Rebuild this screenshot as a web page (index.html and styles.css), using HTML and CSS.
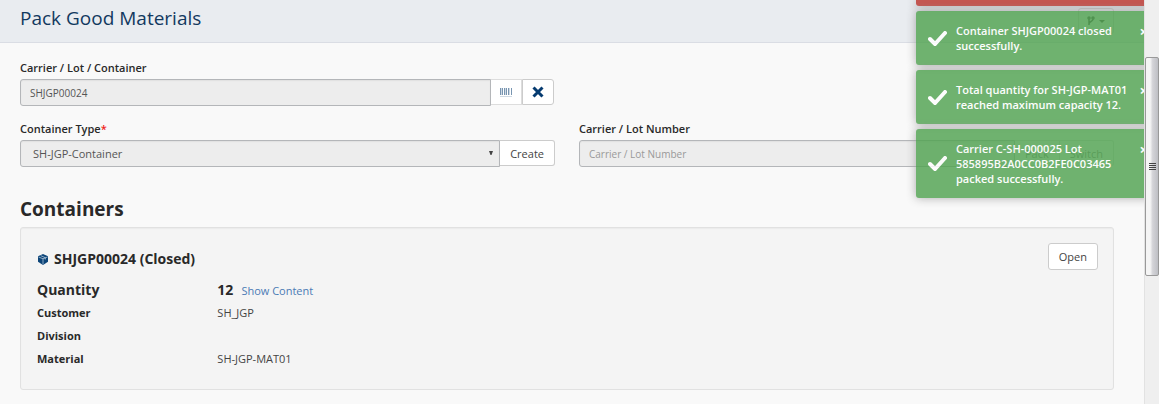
FILE: index.html
```html
<!DOCTYPE html>
<html lang="en">
<head>
<meta charset="utf-8">
<title>Pack Good Materials</title>
<link rel="stylesheet" href="styles.css">
</head>
<body>
<div class="page">
  <header class="page-header">
    <h1 class="page-title">Pack Good Materials</h1>
    <button class="btn branch-btn" type="button" aria-label="Options">
      <svg width="8" height="10" viewBox="0 0 8 10" fill="none" stroke="currentColor" stroke-width="1.500"><circle cx="2" cy="2" r="1"/><circle cx="6" cy="2" r="1"/><path d="M2 3v6M6 3c0 3-4 2-4 5"/></svg>
      <span class="caret"></span>
    </button>
  </header>
  <main class="content">
    <form class="form-grid">
      <div class="field first">
        <label class="label" for="carrier">Carrier / Lot / Container</label>
        <div class="group">
          <input class="control" id="carrier" type="text" value="SHJGP00024" readonly>
          <button class="btn icon-btn scan" type="button" aria-label="Scan barcode">
            <svg width="12" height="9" viewBox="0 0 12 9" fill="#0a3f73"><path d="M0 0h1v7H0zM2 0h1v7H2zM4 0h1v7H4zM6 0h1v7H6zM8 0h1v7H8zM11 0h1v7h-1z"/><path opacity=".35" d="M1 0h1v7H1zM5 0h1v7H5zM9 0h1v7H9zM0 8h12v1H0z"/></svg>
          </button>
          <button class="btn icon-btn" type="button" aria-label="Clear">
            <svg width="12" height="12" viewBox="0 0 12 12" stroke="#063b70" stroke-width="3"><path d="M1.500 1.500l9 9M10.500 1.500l-9 9"/></svg>
          </button>
        </div>
      </div>
      <div class="field">
        <label class="label" for="type">Container Type<span class="required">*</span></label>
        <div class="group">
          <div class="select-wrap">
            <select class="control select" id="type"><option>SH-JGP-Container</option></select>
            <svg class="arrow" width="4" height="4" viewBox="0 0 4 4"><path d="M0 0h4L2.500 4h-1z" fill="#444"/></svg>
          </div>
          <button class="btn" type="button">Create</button>
        </div>
      </div>
      <div class="field">
        <label class="label" for="lot">Carrier / Lot Number</label>
        <div class="group">
          <input class="control" id="lot" type="text" placeholder="Carrier / Lot Number" readonly>
          <button class="btn faded" type="button">Pack</button>
          <button class="btn faded" type="button">Switch</button>
        </div>
      </div>
    </form>
    <h2 class="section-title">Containers</h2>
    <section class="card">
      <div class="card-head">
        <h3 class="card-title">
          <svg width="10" height="11" viewBox="0 0 11 12"><path d="M5.500 0L11 2.500v6L5.500 12 0 8.500v-6z" fill="#0b4478"/><path d="M0.500 3.200l5 2 5-2M5.500 5.200v6M3 1.800l5 2.200v2" fill="none" stroke="#dbe6f0" stroke-width=".7"/></svg>
          SHJGP00024 (Closed)
        </h3>
        <button class="btn open-btn" type="button">Open</button>
      </div>
      <dl class="details">
        <dt class="large">Quantity</dt><dd><strong class="large">12</strong><a class="link" href="#">Show Content</a></dd>
        <dt>Customer</dt><dd>SH_JGP</dd>
        <dt>Division</dt><dd></dd>
        <dt>Material</dt><dd>SH-JGP-MAT01</dd>
      </dl>
    </section>
  </main>
  <div class="toasts">
    <div class="toast error"></div>
    <div class="toast"><svg class="check" width="19" height="15" viewBox="0 0 19 15"><path d="M2 8l5 5L17 2" fill="none" stroke="#fff" stroke-width="4" stroke-linecap="round"/></svg><p class="message">Container SHJGP00024 closed<br>successfully.</p><button class="close" type="button" aria-label="Close">×</button></div>
    <div class="toast"><svg class="check" width="19" height="15" viewBox="0 0 19 15"><path d="M2 8l5 5L17 2" fill="none" stroke="#fff" stroke-width="4" stroke-linecap="round"/></svg><p class="message">Total quantity for SH-JGP-MAT01<br>reached maximum capacity 12.</p><button class="close" type="button" aria-label="Close">×</button></div>
    <div class="toast"><svg class="check" width="19" height="15" viewBox="0 0 19 15"><path d="M2 8l5 5L17 2" fill="none" stroke="#fff" stroke-width="4" stroke-linecap="round"/></svg><p class="message">Carrier C-SH-000025 Lot<br>585895B2A0CC0B2FE0C03465<br>packed successfully.</p><button class="close" type="button" aria-label="Close">×</button></div>
  </div>
</div>
<div class="scrollbar"><div class="thumb"><svg width="7" height="8" viewBox="0 0 7 8" shape-rendering="crispEdges"><path d="M0 0h7v1H0zM0 2h7v1H0zM0 4h7v1H0zM0 6h7v1H0z" fill="#444"/></svg></div></div>
</body>
</html>
```
FILE: styles.css
```css
* { box-sizing: border-box; }
body {
  margin: 0;
  display: flex;
  min-height: 100vh;
  background: #f9f9f9;
  color: #292929;
  font: 11px/15px "Open Sans", sans-serif;
}
h1, h2, h3, p, dl, dd { margin: 0; }
.page { position: relative; flex: 1; min-width: 0; overflow: hidden; }
.page-header {
  display: flex;
  justify-content: space-between;
  align-items: flex-start;
  height: 43px;
  padding: 8px 30px 0 20px;
  background: #e9ecf0;
  border-bottom: 1px solid #dadde4;
}
.page-title { color: #12395f; font-size: 19px; font-weight: 400; line-height: 20px; }
.content { padding: 17px 30px 14px 20px; }
.form-grid { display: grid; grid-template-columns: 1fr 1fr; gap: 15px 24px; }
.first { grid-column: 1 / -1; width: calc(50% - 13px); }
.label { display: block; margin-bottom: 4px; font-size: 11px; font-weight: 600; line-height: 15px; }
.required { color: #e22; }
.group { display: flex; }
.control {
  flex: 1;
  min-width: 0;
  width: 100%;
  height: 27px;
  padding: 0 9px;
  background: #ededed;
  border: 1px solid #b4b6b9;
  border-radius: 3px 0 0 3px;
  box-shadow: inset 0 1px 1px #e0e0e0;
  color: #555;
  font: 10px/15px "Open Sans", sans-serif;
}
.control::placeholder { color: #999; opacity: 1; }
.select-wrap { position: relative; flex: 1; }
.select { appearance: none; padding: 0 12px; font-size: 11px; display: block; }
.arrow { position: absolute; right: 7px; top: 11px; }
.btn {
  height: 26px;
  padding: 0 10px;
  background: #fff;
  border: 1px solid #ccc;
  border-left-width: 0;
  color: #444;
  font: 11px/15px "Open Sans", sans-serif;
}
.group .btn:last-child { border-radius: 0 3px 3px 0; }
.icon-btn { display: flex; align-items: center; justify-content: center; width: 32px; padding: 0; }
.icon-btn + .icon-btn { border-left-width: 1px; }
.scan svg { opacity: .55; }
.scan { width: 31px; border-color: #ddd; }
.faded { opacity: .65; }
.branch-btn { display: flex; align-items: center; justify-content: center; gap: 4px; width: 36px; padding: 0; background: none; border-left-width: 1px; border-radius: 3px; }
.caret { border: 3px solid transparent; border-top-color: currentColor; border-bottom: 0; }
.section-title { margin-top: 30px; font-size: 19px; font-weight: 700; line-height: 24px; }
.card {
  margin-top: 6px;
  padding: 15px 15px 19px 16px;
  background: #f4f4f4;
  border: 1px solid #e1e1e1;
  border-radius: 3px;
  box-shadow: inset 0 1px 1px #ececec;
}
.card-head { display: flex; justify-content: space-between; align-items: flex-start; }
.card-title { display: flex; align-items: center; gap: 6px; padding: 6px 0 0 1px; font-size: 14px; font-weight: 700; line-height: 20px; }
.open-btn { height: 27px; border-left-width: 1px; border-radius: 3px; }
.details { display: grid; grid-template-columns: 17% 1fr; grid-auto-rows: 23px; margin-top: 8px; line-height: 23px; }
.details dt { font-weight: 700; }
.details dd { color: #444; }
.details .large { font-size: 14px; font-weight: 700; color: #292929; }
.link { margin-left: 8px; color: #4b7bb5; text-decoration: none; }
.toasts { position: absolute; top: 0; right: -28px; width: 256px; display: flex; flex-direction: column; gap: 5px; }
.toast {
  display: flex;
  align-items: center;
  gap: 9px;
  padding: 12px;
  background: #51a351;
  border-radius: 3px;
  box-shadow: 0 0 10px #999;
  color: #fff;
  opacity: .82;
}
.error { height: 6px; padding: 0; background: #bd362f; border-radius: 0 0 3px 3px; }
.message { flex: 1; font-weight: 600; white-space: nowrap; }
.close { align-self: flex-start; padding: 0; margin-right: 12px; border: 0; background: none; color: #fff; font: 700 15px/16px "Open Sans", sans-serif; }
.scrollbar { width: 15px; padding-top: 57px; background: #efefef; border-left: 1px solid #e2e2e2; }
.thumb {
  display: flex;
  align-items: center;
  justify-content: center;
  height: 219px;
  border: 1px solid #999;
  border-radius: 2px;
  background: linear-gradient(90deg, #f5f5f5 35%, #d4d4d8 55%, #bebfc4);
}
```
